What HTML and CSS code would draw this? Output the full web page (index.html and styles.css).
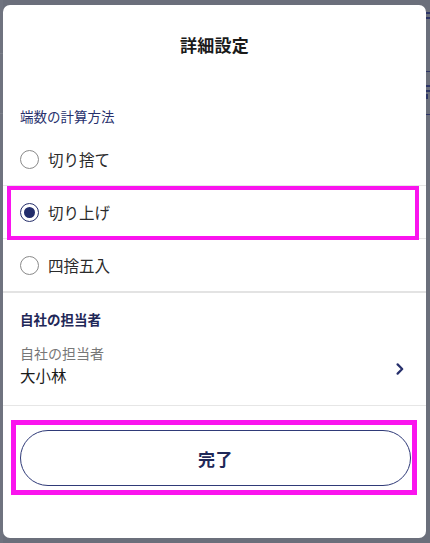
FILE: index.html
```html
<!DOCTYPE html>
<html lang="ja">
<head>
<meta charset="utf-8">
<title>詳細設定</title>
<link rel="stylesheet" href="styles.css">
</head>
<body>
<div class="backdrop">
  <div class="modal">
    <header class="modal-header">
      <h1 class="title">詳細設定</h1>
    </header>

    <section class="section rounding">
      <h2 class="section-label">端数の計算方法</h2>
      <div class="options">
        <label class="option">
          <span class="radio"></span>
          <span class="option-text">切り捨て</span>
        </label>
        <label class="option selected">
          <span class="radio checked"></span>
          <span class="option-text">切り上げ</span>
          <span class="highlight highlight-row"></span>
        </label>
        <label class="option last">
          <span class="radio"></span>
          <span class="option-text">四捨五入</span>
        </label>
      </div>
    </section>

    <section class="section person">
      <h2 class="section-label bold">自社の担当者</h2>
      <div class="field">
        <div class="field-texts">
          <div class="field-label">自社の担当者</div>
          <div class="field-value">大小林</div>
        </div>
        <svg class="chevron" width="8" height="12" viewBox="0 0 8 12" aria-hidden="true">
          <path d="M1.6 1.4 L6.2 6 L1.6 10.6" fill="none" stroke="#27306c" stroke-width="2.2" stroke-linecap="round" stroke-linejoin="round"/>
        </svg>
      </div>
    </section>

    <footer class="modal-footer">
      <div class="button-wrap">
        <button class="done-button" type="button">完了</button>
        <span class="highlight highlight-button"></span>
      </div>
    </footer>
  </div>
</div>
</body>
</html>
```

FILE: styles.css
```css
html, body {
  margin: 0;
  padding: 0;
}

body {
  width: 430px;
  height: 543px;
  overflow: hidden;
  background: #6b6f7b;
  font-family: "Noto Sans CJK JP", "Noto Sans", "Liberation Sans", sans-serif;
  position: relative;
}

/* faint underlying page hints at the edges */
body::before {
  content: "";
  position: absolute;
  left: 0;
  top: 0;
  width: 3px;
  height: 543px;
  background:
    linear-gradient(#7a7e89, #7a7e89) 0 53px / 3px 1px no-repeat,
    linear-gradient(#7a7e89, #7a7e89) 0 113px / 3px 1px no-repeat,
    #6f737f;
}

body::after {
  content: "";
  position: absolute;
  right: 0;
  top: 0;
  width: 4px;
  height: 543px;
  background:
    linear-gradient(#2c3566, #2c3566) 0 12px / 4px 2px no-repeat,
    linear-gradient(#2c3566, #2c3566) 0 17px / 4px 2px no-repeat,
    linear-gradient(#2c3566, #2c3566) 0 71px / 4px 1px no-repeat,
    linear-gradient(#2c3566, #2c3566) 0 85px / 4px 2px no-repeat,
    linear-gradient(#2c3566, #2c3566) 0 90px / 4px 2px no-repeat,
    linear-gradient(#2c3566, #2c3566) 0 94px / 2px 5px no-repeat,
    linear-gradient(#2c3566, #2c3566) 0 114px / 4px 1px no-repeat;
}

.backdrop {
  padding: 5px 4px 5px 3px;
  box-sizing: border-box;
  height: 543px;
}

.modal {
  width: 423px;
  height: 533px;
  background: #ffffff;
  border-radius: 7px;
  display: flex;
  flex-direction: column;
  overflow: visible;
  position: relative;
}

.modal-header {
  height: 80px;
  padding-top: 28px;
  box-sizing: border-box;
  text-align: center;
}

.title {
  margin: 0;
  font-size: 17px;
  line-height: 24px;
  font-weight: 700;
  color: #1a1a1a;
  letter-spacing: 0.3px;
}

.section-label {
  margin: 0;
  padding-left: 17px;
  font-size: 13.5px;
  line-height: 20px;
  font-weight: 400;
  color: #27306c;
}

.section-label.bold {
  font-weight: 700;
  color: #1f2858;
}

.rounding {
  padding-top: 21px;
  border-bottom: 2px solid #e3e3e3;
}

.options {
  margin-top: 7px;
}

.option {
  position: relative;
  display: flex;
  align-items: center;
  gap: 9px;
  height: 52px;
  padding-left: 17px;
  border-bottom: 1px solid #e6e6e6;
  cursor: pointer;
}

.option.last {
  border-bottom: none;
}

.radio {
  width: 19px;
  height: 19px;
  box-sizing: border-box;
  border: 1px solid #8a8a8a;
  border-radius: 50%;
  display: flex;
  align-items: center;
  justify-content: center;
  flex: none;
}

.radio.checked {
  border-color: #27306c;
}

.radio.checked::after {
  content: "";
  width: 11px;
  height: 11px;
  border-radius: 50%;
  background: #222d6b;
}

.option-text {
  font-size: 15.5px;
  line-height: 20px;
  color: #2b2b2b;
}

.highlight {
  position: absolute;
  border: 4px solid #fa14ee;
  box-sizing: border-box;
  pointer-events: none;
}

.highlight-row {
  left: 4px;
  right: 7px;
  top: 0;
  bottom: -2px;
}

.person {
  padding-top: 16px;
  padding-bottom: 20px;
  border-bottom: 1px solid #e6e6e6;
}

.field {
  display: flex;
  align-items: center;
  justify-content: space-between;
  padding: 14px 22px 0 17px;
}

.field-label {
  font-size: 14px;
  line-height: 20px;
  color: #777777;
}

.field-value {
  margin-top: 2px;
  font-size: 15.5px;
  line-height: 20px;
  color: #1a1a1a;
}

.chevron {
  margin-top: 10px;
  display: block;
}

.modal-footer {
  padding: 24px 15px 0 17px;
}

.button-wrap {
  position: relative;
}

.done-button {
  display: block;
  width: 100%;
  height: 56px;
  border: 1px solid #2f3a78;
  border-radius: 28px;
  background: #ffffff;
  font-family: "Noto Sans CJK JP", "Noto Sans", sans-serif;
  font-size: 17px;
  font-weight: 700;
  color: #1f2858;
  letter-spacing: 0.5px;
  cursor: pointer;
}

.highlight-button {
  left: -9px;
  right: -6px;
  top: -10px;
  bottom: -9px;
  border-width: 5px;
}
```
